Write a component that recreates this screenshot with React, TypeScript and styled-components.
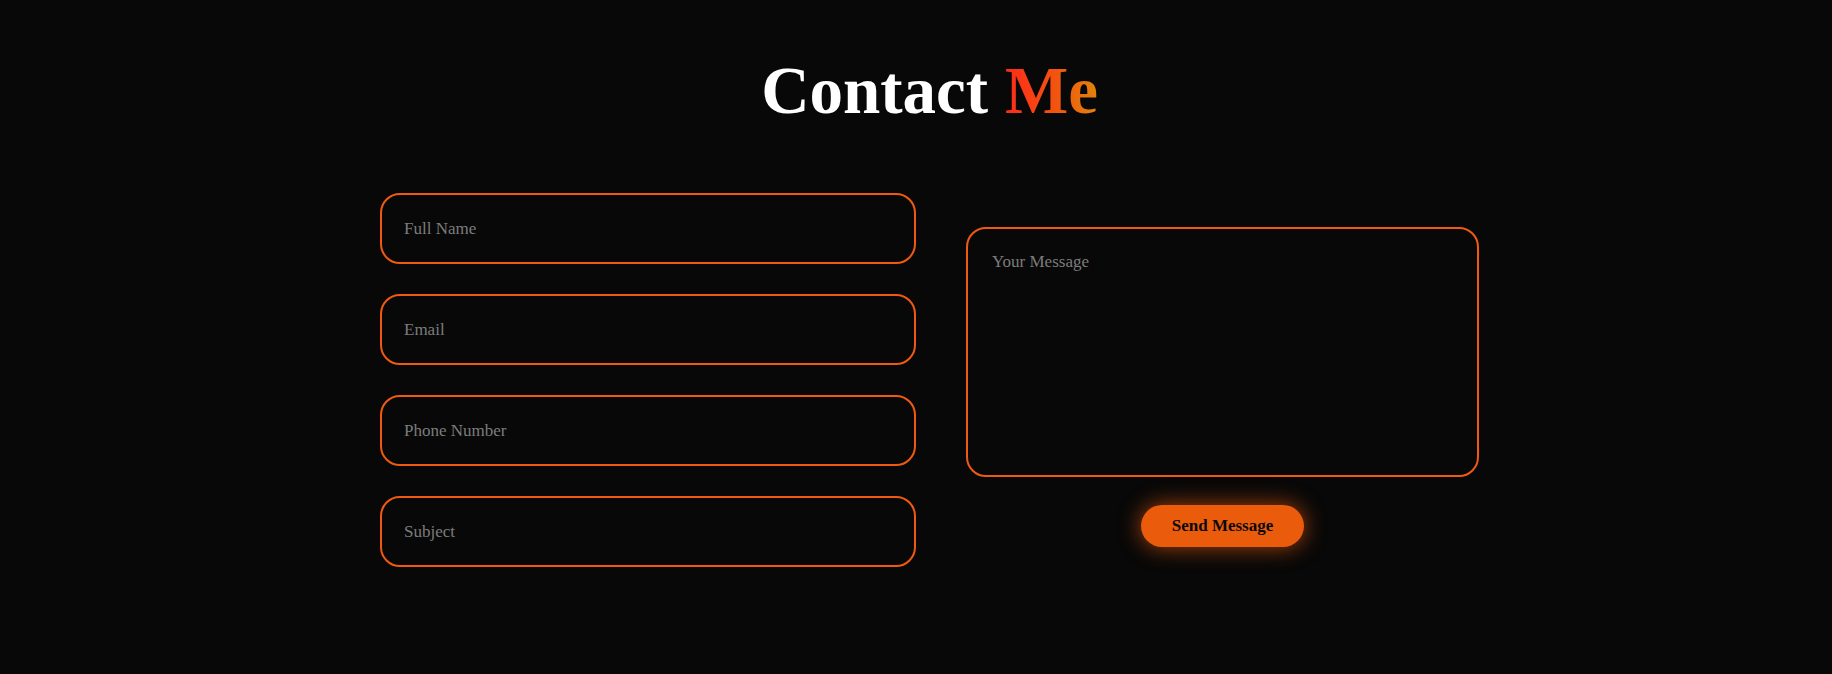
import React from "react";
import styled, { createGlobalStyle } from "styled-components";

const GlobalStyle = createGlobalStyle`
  html, body {
    margin: 0;
    padding: 0;
    background: #080808;
    overflow: hidden;
  }
  body {
    font-family: "Liberation Serif", "Times New Roman", serif;
  }
  * { box-sizing: border-box; }
`;

const Section = styled.section`
  display: flex;
  flex-direction: column;
  align-items: center;
  min-height: 674px;
  padding: 50px 0 0 27px;
  background: #080808;
`;

const Title = styled.h1`
  margin: 0 0 63px;
  font-family: "Liberation Serif", "Times New Roman", serif;
  font-size: 67px;
  font-weight: 700;
  line-height: 1.2;
  color: #ffffff;
`;

const Accent = styled.span`
  background: linear-gradient(90deg, #ff2a1a 0%, #f2540f 55%, #e2840c 100%);
  -webkit-background-clip: text;
  background-clip: text;
  color: transparent;
`;

const Form = styled.form`
  display: grid;
  grid-template-columns: 536px 513px;
  column-gap: 50px;
  align-items: center;
`;

const Column = styled.div<{ $offset?: number; $gap?: number }>`
  display: flex;
  flex-direction: column;
  align-items: center;
  gap: ${(p) => p.$gap ?? 30}px;
  padding-top: ${(p) => p.$offset ?? 0}px;
`;

const fieldStyles = `
  width: 100%;
  background: #080808;
  border: 2px solid #f05a10;
  border-radius: 20px;
  color: #dddddd;
  font-family: "Liberation Serif", "Times New Roman", serif;
  font-size: 17px;
  outline: none;
  &::placeholder { color: #7c7c7c; opacity: 1; }
`;

const Input = styled.input`
  ${fieldStyles}
  height: 71px;
  padding: 0 22px;
`;

const TextArea = styled.textarea`
  ${fieldStyles}
  height: 250px;
  padding: 23px 24px;
  resize: none;
  line-height: normal;
`;

const SendButton = styled.button`
  height: 42px;
  padding: 0 31px;
  border: none;
  border-radius: 21px;
  background: #ea5b0c;
  color: #0a0a0a;
  font-family: "Liberation Serif", "Times New Roman", serif;
  font-size: 17px;
  font-weight: 700;
  cursor: pointer;
  box-shadow: 0 0 22px rgba(240, 92, 14, 0.7);
`;

export default function App() {
  return (
    <>
      <GlobalStyle />
      <Section>
        <Title>
          Contact <Accent>Me</Accent>
        </Title>
        <Form onSubmit={(e) => e.preventDefault()}>
          <Column>
            <Input type="text" placeholder="Full Name" />
            <Input type="email" placeholder="Email" />
            <Input type="tel" placeholder="Phone Number" />
            <Input type="text" placeholder="Subject" />
          </Column>
          <Column $offset={14} $gap={28}>
            <TextArea placeholder="Your Message" />
            <SendButton type="submit">Send Message</SendButton>
          </Column>
        </Form>
      </Section>
    </>
  );
}
